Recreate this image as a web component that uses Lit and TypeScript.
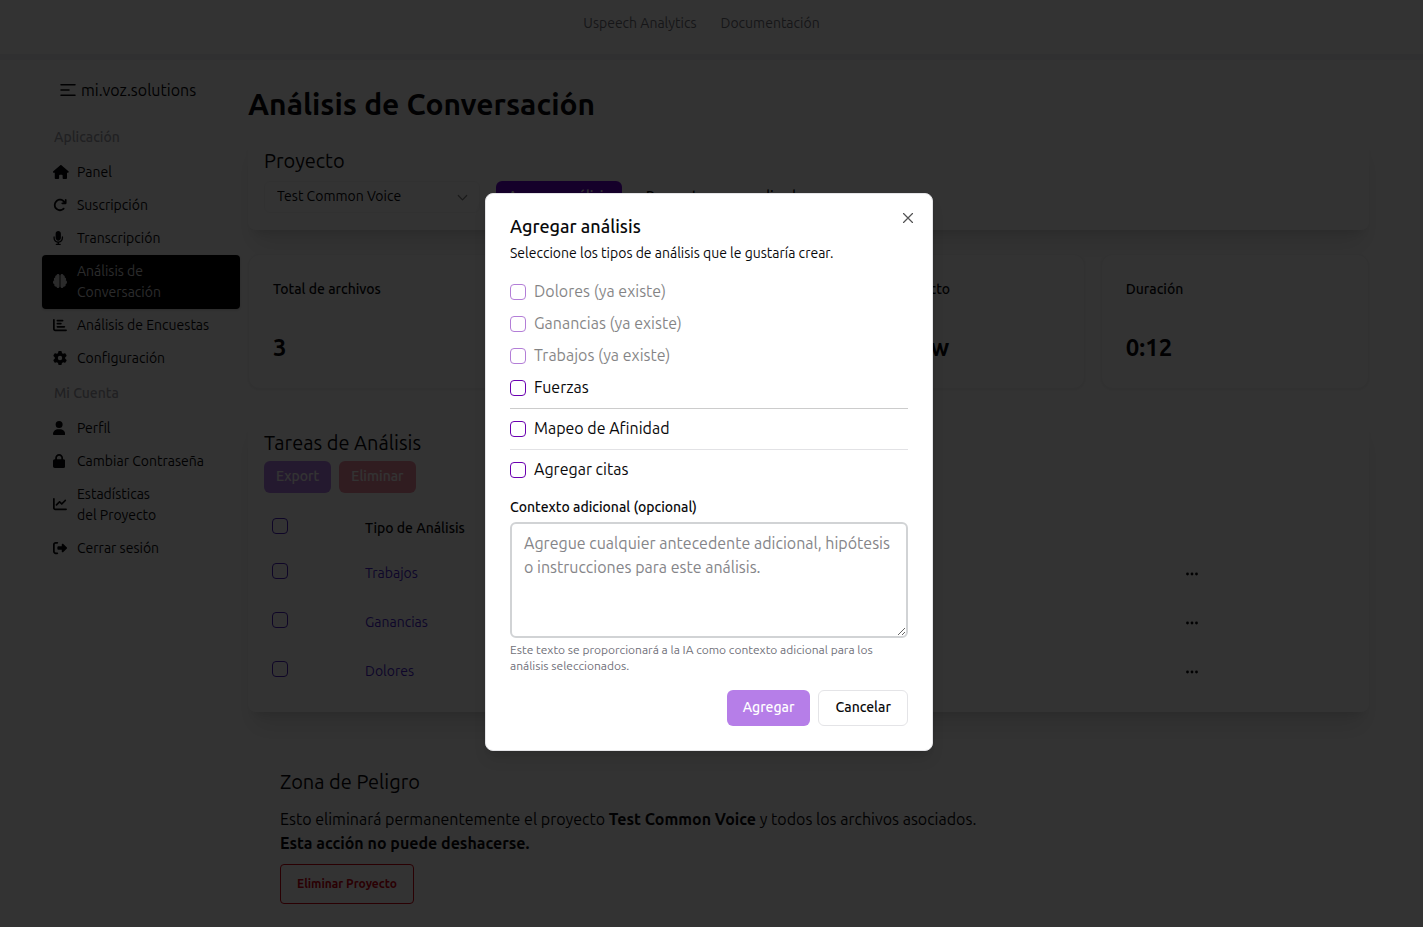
import { LitElement, html, svg, css, nothing } from "lit";

type NavItem = { icon: string; label: string; current?: boolean };

// Solid glyphs: [viewBox width, path]; every one is 512 units high.
const GLYPHS: Record<string, [number, string]> = {
  home: [576, "M575.8 255.500c0 18-15 32.100-32 32.100h-32l.7 160.200c0 2.700-.2 5.400-.5 8.100V472c0 22.100-17.900 40-40 40H456c-1.100 0-2.200 0-3.300-.1-1.400.1-2.800.1-4.200.1H392c-22.100 0-40-17.900-40-40v-88c0-17.700-14.300-32-32-32h-64c-17.700 0-32 14.300-32 32v88c0 22.100-17.900 40-40 40h-56c-1.500 0-3-.1-4.500-.2-1.200.1-2.400.2-3.600.2h-16c-22.100 0-40-17.900-40-40V360c0-.9 0-1.900.1-2.800V287.600H32c-18 0-32-14-32-32.100 0-9 3-17 10-24L266.400 8c7-7 15-8 22-8s15 2 21 7l255.400 224.500c8 7 12 15 11 24z"],
  redo: [512, "M386.300 160H336c-17.700 0-32 14.300-32 32s14.300 32 32 32h128c17.700 0 32-14.300 32-32V64c0-17.700-14.300-32-32-32s-32 14.300-32 32v51.200l-17.600-17.600c-87.500-87.500-229.300-87.500-316.800 0s-87.500 229.300 0 316.800 229.300 87.500 316.800 0c12.500-12.500 12.500-32.800 0-45.300s-32.800-12.500-45.300 0c-62.500 62.500-163.800 62.500-226.300 0s-62.500-163.800 0-226.300 163.800-62.500 226.300 0L386.300 160z"],
  mic: [384, "M192 0c-53 0-96 43-96 96v160c0 53 43 96 96 96s96-43 96-96V96c0-53-43-96-96-96zM64 216c0-13.300-10.700-24-24-24s-24 10.700-24 24v40c0 89.100 66.200 162.700 152 174.400V464h-48c-13.300 0-24 10.700-24 24s10.700 24 24 24h144c13.300 0 24-10.700 24-24s-10.700-24-24-24h-48v-33.600c85.800-11.700 152-85.300 152-174.400v-40c0-13.300-10.700-24-24-24s-24 10.700-24 24v40c0 70.700-57.300 128-128 128S64 326.700 64 256v-40z"],
  brain: [512, "M184 0c30.900 0 56 25.100 56 56v400c0 30.900-25.100 56-56 56-28.900 0-52.700-21.900-55.700-50.100-5.200 1.400-10.700 2.100-16.300 2.100-35.300 0-64-28.700-64-64 0-7.400 1.300-14.600 3.600-21.200C21.400 367.400 0 338.200 0 304c0-31.900 18.700-59.500 45.800-72.300C37.100 220.800 32 207 32 192c0-30.700 21.600-56.300 50.400-62.600C80.800 123.900 80 118 80 112c0-29.900 20.600-55.100 48.300-62.100C131.300 21.900 155.100 0 184 0zM328 0c28.900 0 52.600 21.900 55.700 49.900 27.800 7 48.300 32.100 48.300 62.100 0 6-.8 11.900-2.400 17.400 28.800 6.200 50.400 31.900 50.400 62.600 0 15-5.100 28.800-13.800 39.700C493.300 244.500 512 272.100 512 304c0 34.200-21.400 63.400-51.600 74.800 2.300 6.600 3.600 13.800 3.600 21.200 0 35.300-28.700 64-64 64-5.600 0-11.100-.7-16.300-2.100-3 28.200-26.800 50.100-55.700 50.100-30.900 0-56-25.100-56-56V56c0-30.900 25.100-56 56-56z"],
  bars: [512, "M32 32c17.700 0 32 14.300 32 32v336c0 8.800 7.200 16 16 16h400c17.700 0 32 14.300 32 32s-14.300 32-32 32H80c-44.200 0-80-35.800-80-80V64c0-17.700 14.300-32 32-32zm96 64c0-17.700 14.300-32 32-32h192c17.700 0 32 14.300 32 32s-14.300 32-32 32H160c-17.700 0-32-14.300-32-32zm32 80h128c17.700 0 32 14.300 32 32s-14.300 32-32 32H160c-17.700 0-32-14.300-32-32s14.300-32 32-32zm0 112h256c17.700 0 32 14.300 32 32s-14.300 32-32 32H160c-17.700 0-32-14.300-32-32s14.300-32 32-32z"],
  gear: [512, "M495.900 166.600c3.200 8.700.5 18.400-6.400 24.600l-43.300 39.400c1.100 8.300 1.700 16.800 1.700 25.400s-.6 17.100-1.700 25.400l43.300 39.400c6.900 6.200 9.600 15.900 6.400 24.600-4.400 11.900-9.700 23.300-15.800 34.300l-4.700 8.100c-6.600 11-14 21.400-22.100 31.200-5.900 7.200-15.700 9.600-24.500 6.800l-55.700-17.700c-13.400 10.300-28.200 18.900-44 25.400l-12.500 57.100c-2 9.100-9 16.300-18.200 17.800-13.800 2.300-28 3.500-42.500 3.500s-28.700-1.200-42.500-3.500c-9.200-1.500-16.200-8.700-18.200-17.800l-12.500-57.100c-15.800-6.500-30.600-15.100-44-25.400L83.100 425.900c-8.800 2.800-18.600.3-24.500-6.800-8.100-9.800-15.500-20.200-22.100-31.200l-4.700-8.100c-6.100-11-11.400-22.400-15.800-34.300-3.200-8.700-.5-18.400 6.400-24.600l43.300-39.400C64.600 273.100 64 264.600 64 256s.6-17.100 1.700-25.400L22.400 191.200c-6.900-6.200-9.600-15.900-6.400-24.600 4.400-11.900 9.700-23.300 15.800-34.300l4.700-8.100c6.600-11 14-21.400 22.100-31.200 5.900-7.200 15.700-9.600 24.500-6.800l55.700 17.700c13.400-10.300 28.200-18.900 44-25.400l12.500-57.100c2-9.100 9-16.300 18.200-17.800C227.300 1.200 241.500 0 256 0s28.700 1.200 42.500 3.500c9.200 1.500 16.200 8.700 18.200 17.800l12.500 57.100c15.800 6.500 30.600 15.100 44 25.400l55.700-17.700c8.800-2.800 18.600-.3 24.500 6.800 8.100 9.800 15.500 20.200 22.100 31.200l4.700 8.100c6.100 11 11.400 22.400 15.800 34.300zM256 336a80 80 0 1 0 0-160 80 80 0 1 0 0 160z"],
  user: [448, "M224 256a128 128 0 1 0 0-256 128 128 0 1 0 0 256zm-45.700 48C79.800 304 0 383.800 0 482.300 0 498.700 13.300 512 29.700 512h388.600c16.400 0 29.700-13.300 29.700-29.700C448 383.800 368.200 304 269.700 304h-91.400z"],
  lock: [448, "M144 144v48h160v-48c0-44.200-35.800-80-80-80s-80 35.800-80 80zm-64 48v-48C80 64.500 144.500 0 224 0s144 64.500 144 144v48h16c35.300 0 64 28.700 64 64v192c0 35.300-28.700 64-64 64H64c-35.300 0-64-28.700-64-64V256c0-35.300 28.700-64 64-64h16z"],
  line: [512, "M64 64c0-17.700-14.300-32-32-32S0 46.300 0 64v336c0 44.200 35.800 80 80 80h400c17.700 0 32-14.300 32-32s-14.300-32-32-32H80c-8.800 0-16-7.200-16-16V64zm406.600 86.600c12.500-12.500 12.500-32.800 0-45.300s-32.800-12.500-45.300 0L320 210.700l-57.400-57.300c-12.500-12.500-32.800-12.500-45.300 0l-112 112c-12.500 12.500-12.500 32.800 0 45.300s32.800 12.500 45.300 0l89.400-89.400 57.400 57.400c12.500 12.500 32.800 12.500 45.300 0l128-128z"],
  exit: [512, "M377.900 105.900l122.800 122.800c7.200 7.200 11.300 17.100 11.300 27.300s-4.100 20.100-11.300 27.300L377.900 406.100c-6.400 6.400-15 9.900-24 9.900-18.700 0-33.900-15.200-33.900-33.900V320H192c-17.700 0-32-14.300-32-32v-64c0-17.700 14.300-32 32-32h128v-62.100c0-18.700 15.200-33.900 33.900-33.900 9 0 17.600 3.600 24 9.900zM160 96H96c-17.700 0-32 14.300-32 32v256c0 17.700 14.300 32 32 32h64c17.700 0 32 14.300 32 32s-14.300 32-32 32H96c-53 0-96-43-96-96V128C0 75 43 32 96 32h64c17.700 0 32 14.300 32 32s-14.300 32-32 32z"],
};

const APP_NAV: NavItem[] = [
  { icon: "home", label: "Panel" },
  { icon: "redo", label: "Suscripción" },
  { icon: "mic", label: "Transcripción" },
  { icon: "brain", label: "Análisis de Conversación", current: true },
  { icon: "bars", label: "Análisis de Encuestas" },
  { icon: "gear", label: "Configuración" },
];
const ACCOUNT_NAV: NavItem[] = [
  { icon: "user", label: "Perfil" },
  { icon: "lock", label: "Cambiar Contraseña" },
  { icon: "line", label: "Estadísticas del\u00a0Proyecto" },
  { icon: "exit", label: "Cerrar sesión" },
];
const STATS = [
  ["Total de archivos", "3"],
  ["", ""],
  ["Tipo de proyecto", "Interview"],
  ["Duración", "0:12"],
];
const TASKS = ["Trabajos", "Ganancias", "Dolores"];
const EXISTING = ["Dolores", "Ganancias", "Trabajos"];

const shared = css`
  * { box-sizing: border-box; }
  h1, h2, h3, p { margin: 0; font-weight: inherit; }
  a { color: inherit; text-decoration: none; }
  button, select, textarea { font: inherit; color: inherit; }
  svg { display: block; flex: none; }
  .check {
    appearance: none;
    display: block;
    flex: none;
    width: 16px;
    height: 16px;
    margin: 0;
    border: 1px solid #6a00b0;
    border-radius: 4px;
  }
  .check:checked { background: #6a00b0; }
`;

class AppSidebar extends LitElement {
  static styles = [shared, css`
    :host { display: block; }
    .brand { display: flex; align-items: center; gap: 5px; padding: 18px 18px 17px; font-size: 16px; line-height: 24px; }
    .heading { padding: 8px 12px; font-size: 14px; line-height: 21px; font-weight: 500; color: #a1a1aa; }
    .item { display: flex; align-items: center; gap: 8px; padding: 6px 11px; border-radius: 4px; font-size: 14px; line-height: 21px; }
    .item.current { background: #000; color: #d4d4d8; box-shadow: 0 1px 3px rgba(0, 0, 0, 0.2); }
    .glyph { width: 16px; padding-bottom: 2px; }
    .label { max-width: 140px; }
  `];

  private item(n: NavItem) {
    const [w, d] = GLYPHS[n.icon];
    return html`<a class="item ${n.current ? "current" : ""}" href="#" aria-current=${n.current ? "page" : nothing}>
      <span class="glyph"><svg width=${(w * 14) / 512} height="14" viewBox="0 0 ${w} 512" fill="currentColor"><path fill-rule="evenodd" d=${d}></path></svg></span>
      <span class="label">${n.label}</span>
    </a>`;
  }

  render() {
    return html`
      <a class="brand" href="#">
        <svg width="16" height="14" viewBox="0 0 16 14" fill="none" stroke="currentColor" stroke-width="1.500" stroke-linecap="round"><path d="M1 1.700h14M1 7h8M1 12.300h14"></path></svg>
        mi.voz.solutions
      </a>
      <nav>
        <h2 class="heading">Aplicación</h2>
        ${APP_NAV.map((n) => this.item(n))}
        <h2 class="heading">Mi Cuenta</h2>
        ${ACCOUNT_NAV.map((n) => this.item(n))}
      </nav>`;
  }
}
customElements.define("app-sidebar", AppSidebar);

class AnalysisDialog extends LitElement {
  static styles = [shared, css`
    :host {
      position: absolute;
      inset: 0;
      display: flex;
      align-items: center;
      justify-content: center;
      padding: 17px 5px 0 0;
      background: rgba(0, 0, 0, 0.8);
    }
    .dialog {
      position: relative;
      width: 448px;
      max-width: 100%;
      padding: 24px;
      border: 1px solid #e4e4e7;
      border-radius: 8px;
      background: #fff;
      box-shadow: 0 10px 15px -3px rgba(0, 0, 0, 0.1), 0 4px 6px -4px rgba(0, 0, 0, 0.1);
    }
    .title { font-size: 18px; line-height: 16px; font-weight: 500; }
    .intro { margin-top: 9px; font-size: 14px; line-height: 20px; }
    .close { position: absolute; top: 16px; right: 16px; padding: 0; border: 0; background: none; opacity: 0.7; }
    .options { display: grid; gap: 8px; margin-top: 17px; }
    .option { display: flex; align-items: center; gap: 8px; font-size: 16px; line-height: 22px; }
    .option label { padding-bottom: 2px; }
    .option.off { opacity: 0.5; }
    .rule { height: 1px; margin: 0; border: 0; background: #ccc; }
    .rule.soft { background: #e2e2e5; }
    .field { display: block; margin-top: 18px; font-size: 14px; line-height: 14px; font-weight: 500; }
    .context {
      display: block;
      width: 100%;
      margin-top: 8px;
      padding: 7px 12px 9px;
      border: 2px solid #d1d3d5;
      border-radius: 6px;
      background: #fff;
      font-size: 16px;
      line-height: 24px;
      resize: vertical;
    }
    .context::placeholder { color: #858589; }
    .help { margin-top: 4px; font-size: 12px; line-height: 16px; color: #71717a; }
    .actions { display: flex; justify-content: flex-end; gap: 8px; margin-top: 16px; }
    .btn { height: 36px; padding: 0 16px 2px; border: 1px solid #e4e4e7; border-radius: 6px; background: #fff; font-size: 14px; line-height: 20px; font-weight: 500; }
    .btn.primary { border: 0; background: #6f00d3; color: #fff; }
    .btn:disabled { opacity: 0.5; }
  `];

  private option(id: string, label: string, off = false) {
    return html`<div class="option ${off ? "off" : ""}">
      <input class="check" type="checkbox" id=${id} ?disabled=${off} />
      <label for=${id}>${label}</label>
    </div>`;
  }

  render() {
    return html`<div class="dialog" role="dialog" aria-modal="true" aria-labelledby="dialog-title">
      <h2 class="title" id="dialog-title">Agregar análisis</h2>
      <p class="intro">Seleccione los tipos de análisis que le gustaría crear.</p>
      <div class="options">
        ${EXISTING.map((t) => this.option(`opt-${t}`, `${t} (ya existe)`, true))}
        ${this.option("opt-fuerzas", "Fuerzas")}
        <hr class="rule" />
        ${this.option("opt-mapeo", "Mapeo de Afinidad")}
        <hr class="rule soft" />
        ${this.option("opt-citas", "Agregar citas")}
      </div>
      <label class="field" for="context">Contexto adicional (opcional)</label>
      <textarea class="context" id="context" rows="4" placeholder="Agregue cualquier antecedente adicional, hipótesis o instrucciones para este análisis."></textarea>
      <p class="help">Este texto se proporcionará a la IA como contexto adicional para los análisis seleccionados.</p>
      <div class="actions">
        <button class="btn primary" disabled>Agregar</button>
        <button class="btn">Cancelar</button>
      </div>
      <button class="close" aria-label="Cerrar">
        <svg width="16" height="16" viewBox="0 0 15 15" fill="none" stroke="currentColor" stroke-width="1.100" stroke-linecap="round"><path d="M3.300 3.300l8.400 8.400M11.700 3.300l-8.400 8.400"></path></svg>
      </button>
    </div>`;
  }
}
customElements.define("analysis-dialog", AnalysisDialog);

class AppRoot extends LitElement {
  static styles = [shared, css`
    :host {
      position: relative;
      display: block;
      min-height: 100vh;
      overflow: hidden;
      background: #fff;
      color: #09090b;
      font: 400 16px/24px "Ubuntu", "Open Sans", sans-serif;
    }
    .top { display: flex; justify-content: center; gap: 24px; height: 60px; padding: 13px 20px 0 0; border-bottom: 6px solid #f1f1f2; font-size: 14px; line-height: 21px; color: #71717a; }
    .page { display: grid; grid-template-columns: 198px minmax(0, 1fr); gap: 8px; padding: 0 54px 23px 42px; }
    .main { padding-top: 24px; }
    .title { font-size: 30px; line-height: 40px; font-weight: 700; }
    .panel { padding: 17px 16px; border-radius: 8px; background: #fff; box-shadow: 0 20px 25px -5px rgba(0, 0, 0, 0.1), 0 8px 10px -6px rgba(0, 0, 0, 0.1); }
    .panel-title { font-size: 20px; line-height: 28px; }
    .project { margin-top: 6px; }
    .row { display: flex; align-items: center; gap: 8px; margin-top: 6px; }
    .pick { position: relative; width: 216px; margin-right: 8px; }
    .pick select { appearance: none; display: block; width: 100%; height: 32px; padding: 0 12px 2px; border: 1px solid #f4f4f5; border-radius: 6px; background: #fff; font-size: 14px; line-height: 20px; }
    .pick svg { position: absolute; top: 9px; right: 10px; opacity: 0.5; }
    .btn { height: 32px; padding: 0 12px 2px; border: 0; border-radius: 6px; background: none; font-size: 14px; line-height: 20px; font-weight: 500; }
    .btn.wide { padding: 0 16px 2px; }
    .btn.primary { background: #6b00d3; color: #fff; }
    .btn.danger { background: #e11d48; color: #fff; }
    .btn:disabled { opacity: 0.5; }
    .stats { display: grid; grid-template-columns: repeat(4, minmax(0, 1fr)); gap: 16px; margin: 24px 0 23px; }
    .stat { padding: 24px; border: 1px solid #f4f4f5; border-radius: 12px; box-shadow: 0 1px 3px rgba(0, 0, 0, 0.08); background: #fff; }
    .stat-label { font-size: 14px; line-height: 20px; font-weight: 500; }
    .stat-value { margin-top: 33px; font-size: 24px; line-height: 32px; font-weight: 700; }
    .tools { display: flex; gap: 8px; margin: 4px 0 15px; }
    .tasks { width: 100%; border-collapse: collapse; table-layout: fixed; font-size: 14px; line-height: 20px; }
    .tasks th, .tasks td { padding: 0 8px; text-align: left; vertical-align: middle; }
    .tasks th { height: 40px; font-weight: 500; }
    .tasks td { height: 49px; }
    .tasks .check { margin-bottom: 4px; border-color: #4a1fc0; }
    .col-check { width: 93px; }
    .col-more { width: 185px; }
    .link { color: #4a1fd0; }
    .more { display: block; padding: 9px 8px 7px; border: 0; background: none; }
    .danger-zone { padding: 56px 32px 0; }
    .danger-text { margin: 11px 0 9px; }
    .delete { height: 40px; padding: 0 16px; border: 1px solid #d00010; border-radius: 4px; background: none; color: #d00010; font-size: 12px; line-height: 16px; font-weight: 600; }
    strong { font-weight: 700; }
  `];

  render() {
    return html`
      <header class="top"><a href="#">Uspeech Analytics</a><a href="#">Documentación</a></header>
      <div class="page">
        <app-sidebar></app-sidebar>
        <main class="main">
          <h1 class="title">Análisis de Conversación</h1>
          <section class="panel project">
            <h2 class="panel-title">Proyecto</h2>
            <div class="row">
              <div class="pick">
                <select aria-label="Proyecto"><option>Test Common Voice</option></select>
                <svg width="15" height="15" viewBox="0 0 15 15" fill="none" stroke="currentColor" stroke-width="1.200" stroke-linecap="round" stroke-linejoin="round"><path d="M3.300 5.500l4.200 4.300 4.200-4.300"></path></svg>
              </div>
              <button class="btn primary">Agregar análisis</button>
              <button class="btn wide">Preguntas personalizadas</button>
            </div>
          </section>
          <section class="stats">
            ${STATS.map(([label, value]) => html`<div class="stat"><h3 class="stat-label">${label}</h3><p class="stat-value">${value}</p></div>`)}
          </section>
          <section class="panel">
            <h2 class="panel-title">Tareas de Análisis</h2>
            <div class="tools">
              <button class="btn primary" disabled>Export</button>
              <button class="btn danger" disabled>Eliminar</button>
            </div>
            <table class="tasks">
              <thead><tr>
                <th class="col-check"><input class="check" type="checkbox" aria-label="Seleccionar todo" /></th>
                <th>Tipo de Análisis</th><th></th><th class="col-more"></th>
              </tr></thead>
              <tbody>${TASKS.map((t) => html`<tr>
                <td><input class="check" type="checkbox" aria-label="Seleccionar ${t}" /></td>
                <td><a class="link" href="#">${t}</a></td>
                <td></td>
                <td><button class="more" aria-label="Acciones"><svg width="16" height="16" viewBox="0 0 16 16" fill="currentColor">${[3.5, 8, 12.5].map((x) => svg`<circle cx=${x} cy="8" r="1.400"></circle>`)}</svg></button></td>
              </tr>`)}</tbody>
            </table>
          </section>
          <section class="danger-zone">
            <h2 class="panel-title">Zona de Peligro</h2>
            <p class="danger-text">Esto eliminará permanentemente el proyecto <strong>Test Common Voice</strong> y todos los archivos asociados.<br /><strong>Esta acción no puede deshacerse.</strong></p>
            <button class="delete">Eliminar Proyecto</button>
          </section>
        </main>
      </div>
      <analysis-dialog></analysis-dialog>`;
  }
}
customElements.define("app-root", AppRoot);
